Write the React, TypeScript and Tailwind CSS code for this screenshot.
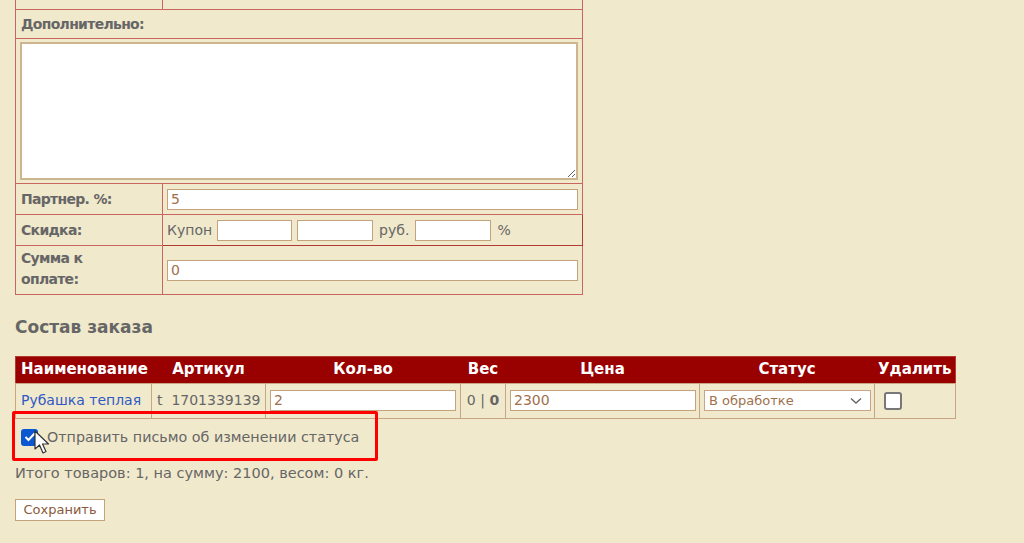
import React from "react";

const font = { fontFamily: '"DejaVu Sans", Verdana, sans-serif' };

const Input = ({ value = "", className = "" }: { value?: string; className?: string }) => (
  <input
    type="text"
    defaultValue={value}
    className={`h-[21px] border border-[#c4a27c] bg-white px-[3px] text-[14px] text-[#a0704c] outline-none ${className}`}
  />
);

const Cursor = () => (
  <svg width="18" height="26" viewBox="0 0 18 26" className="absolute left-[34px] top-[430px]">
    <path
      d="M1 1 L1 19 L5.5 15 L9 23 L12 21.5 L8.5 14 L14.5 14 Z"
      fill="#fff"
      stroke="#333"
      strokeWidth="1.2"
      strokeLinejoin="round"
    />
  </svg>
);

const label = "border border-[#c8665f] px-[5px] text-[14px] font-bold tracking-[-0.7px]";

export default function App() {
  return (
    <div style={font} className="relative min-h-[543px] w-full overflow-hidden bg-[#f1e9cc] pl-[15px] text-[14px] text-[#666]">
      {/* Order form */}
      <table className="-mt-[20px] w-[568px] border-collapse border border-[#b23a34]">
        <tbody>
          <tr className="h-[29px]">
            <td className={`w-[147px] ${label}`}>КГ:</td>
            <td className="border border-[#c8665f]" />
          </tr>
          <tr className="h-[29px]">
            <td colSpan={2} className={label}>
              Дополнительно:
            </td>
          </tr>
          <tr>
            <td colSpan={2} className="border border-[#c8665f] px-[4px] py-[3px]">
              <textarea className="block h-[138px] w-[558px] border-2 border-[#cdb590] bg-white outline-none" />
            </td>
          </tr>
          <tr className="h-[31px]">
            <td className={label}>Партнер. %:</td>
            <td className="border border-[#c8665f] px-[4px]">
              <Input value="5" className="block w-[411px]" />
            </td>
          </tr>
          <tr className="h-[31px]">
            <td className={label}>Скидка:</td>
            <td className="border border-[#b23a34] px-[4px]">
              <div className="flex items-center">
                <span>Купон</span>
                <Input className="ml-[5px] w-[75px]" />
                <Input className="ml-[5px] w-[76px]" />
                <span className="ml-[6px]">руб.</span>
                <Input className="ml-[6px] w-[76px]" />
                <span className="ml-[6px]">%</span>
              </div>
            </td>
          </tr>
          <tr className="h-[49px]">
            <td className={`${label} pb-[2px] leading-[21px]`}>
              Сумма к<br />оплате:
            </td>
            <td className="border border-[#c8665f] px-[4px]">
              <Input value="0" className="block w-[411px]" />
            </td>
          </tr>
        </tbody>
      </table>

      <h2 className="mt-[20px] text-[17px] font-bold text-[#666]">Состав заказа</h2>

      {/* Order items */}
      <table className="mt-[15px] w-[940px] table-fixed border-collapse border border-[#b23a34]">
        <thead>
          <tr className="h-[27px] bg-[#990000] text-[15px] text-white">
            <th className="w-[136px] px-[5px] text-left whitespace-nowrap">Наименование</th>
            <th className="w-[114px]">Артикул</th>
            <th className="w-[195px]">Кол-во</th>
            <th className="w-[45px]">Вес</th>
            <th className="w-[194px]">Цена</th>
            <th className="w-[175px]">Статус</th>
            <th className="w-[81px] whitespace-nowrap">Удалить</th>
          </tr>
        </thead>
        <tbody>
          <tr className="h-[35px]">
            <td className="border border-[#c8a585] px-[5px] whitespace-nowrap text-[#2f59c4]">Рубашка теплая</td>
            <td className="border border-[#c8a585] px-[5px] whitespace-nowrap">t&nbsp; 1701339139</td>
            <td className="border border-[#c8a585] px-[4px]">
              <Input value="2" className="block w-[186px]" />
            </td>
            <td className="border border-[#c8a585] text-center whitespace-nowrap">
              0 | <b>0</b>
            </td>
            <td className="border border-[#c8a585] px-[4px]">
              <Input value="2300" className="block w-[186px]" />
            </td>
            <td className="border border-[#c8a585] px-[4px]">
              <div className="relative flex h-[21px] w-[167px] items-center border border-[#c8a585] bg-white pl-[4px] text-[13px] text-[#a0704c]">
                В обработке
                <svg width="12" height="8" viewBox="0 0 12 8" className="absolute right-[8px] top-[6px]">
                  <path d="M1 1.5 L6 6 L11 1.5" fill="none" stroke="#666" strokeWidth="1.4" />
                </svg>
              </div>
            </td>
            <td className="border border-[#c8a585] px-[9px]">
              <span className="block h-[18px] w-[18px] rounded-[3px] border-2 border-[#777] bg-white" />
            </td>
          </tr>
        </tbody>
      </table>

      <div className="mt-[8px] flex items-center pl-[6px] text-[14.3px]">
        <span className="flex h-[17px] w-[17px] items-center justify-center rounded-[3px] bg-[#0b57d0]">
          <svg width="12" height="10" viewBox="0 0 12 10">
            <path d="M1.5 5 L4.5 8 L10.5 1.5" fill="none" stroke="#fff" strokeWidth="2" />
          </svg>
        </span>
        <span className="ml-[9px]">Отправить письмо об изменении статуса</span>
      </div>

      <p className="mt-[15px] text-[14.5px]">Итого товаров: 1, на сумму: 2100, весом: 0 кг.</p>

      <button className="mt-[14px] h-[22px] w-[90px] border border-[#c4a27c] bg-white text-[13px] text-[#8a5a3a]">
        Сохранить
      </button>

      {/* highlight annotation */}
      <div className="absolute left-[12px] top-[411px] h-[50px] w-[366px] rounded-[2px] border-[3px] border-[#ff0000]" />
      <Cursor />
    </div>
  );
}
